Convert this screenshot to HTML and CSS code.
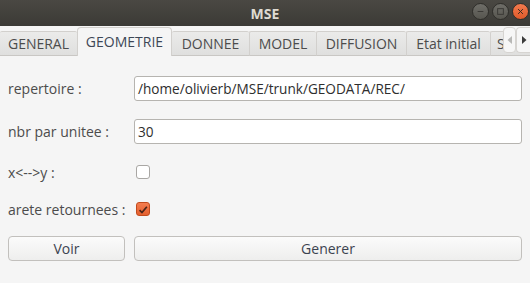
FILE: index.html
```html
<!DOCTYPE html>
<html>
<head>
<meta charset="utf-8">
<link rel="stylesheet" href="styles.css">
</head>
<body>
<div class="window">
  <div class="titlebar">
    <span class="title">MSE</span>
    <div class="wbtns">
      <span class="wbtn"><svg width="16" height="16" viewBox="0 0 16 16"><line x1="4.5" y1="8" x2="11.5" y2="8" stroke="#3a3935" stroke-width="1.2"/></svg></span>
      <span class="wbtn"><svg width="16" height="16" viewBox="0 0 16 16"><rect x="4.5" y="4.5" width="7" height="7" fill="none" stroke="#3a3935" stroke-width="1.2"/></svg></span>
      <span class="wbtn close"><svg width="16" height="16" viewBox="0 0 16 16"><path d="M5 5L11 11M11 5L5 11" stroke="#3a2a20" stroke-width="1.2"/></svg></span>
    </div>
  </div>
  <div class="tabbar">
    <div class="tab t1">GENERAL</div>
    <div class="tab t2 active">GEOMETRIE</div>
    <div class="tab t3">DONNEE</div>
    <div class="tab t4">MODEL</div>
    <div class="tab t5">DIFFUSION</div>
    <div class="tab t6">Etat initial</div>
    <div class="tab t7">S</div>
    <div class="scroll">
      <span class="sbtn left"><svg width="8" height="10" viewBox="0 0 8 10"><path d="M6 1L1.5 5L6 9Z" fill="#b8b8b6"/></svg></span>
      <span class="sbtn right"><svg width="8" height="10" viewBox="0 0 8 10"><path d="M2 1L6.5 5L2 9Z" fill="#3c3c3c"/></svg></span>
    </div>
  </div>
  <div class="content">
    <div class="row">
      <label class="lbl">repertoire :</label>
      <div class="input">/home/olivierb/MSE/trunk/GEODATA/REC/</div>
    </div>
    <div class="row">
      <label class="lbl">nbr par unitee :</label>
      <div class="input">30</div>
    </div>
    <div class="row crow">
      <label class="lbl">x&lt;--&gt;y :</label>
      <span class="check"></span>
    </div>
    <div class="row crow">
      <label class="lbl">arete retournees :</label>
      <span class="check on"><svg width="14" height="14" viewBox="0 0 14 14"><path d="M3 7.2L5.8 10L11.5 3.2" fill="none" stroke="#4a2418" stroke-width="2"/></svg></span>
    </div>
    <div class="row brow">
      <div class="btn voir">Voir</div>
      <div class="btn gen">Generer</div>
    </div>
  </div>
</div>
</body>
</html>
```
FILE: styles.css
```css
html, body {
  margin: 0;
  padding: 0;
  width: 530px;
  height: 283px;
  overflow: hidden;
  background: #f5f5f5;
  font-family: "Open Sans", "Noto Sans", sans-serif;
  font-size: 13px;
  color: #4c4c4c;
}
.window {
  display: flex;
  flex-direction: column;
  height: 283px;
}
.titlebar {
  height: 26px;
  background: linear-gradient(#4a4843, #3b3a36);
  display: flex;
  align-items: center;
  justify-content: center;
  position: relative;
}
.title {
  color: #dfdbd2;
  font-weight: bold;
  font-size: 14px;
  font-family: "Open Sans", sans-serif;
}
.wbtns {
  position: absolute;
  right: 1px;
  top: 3px;
  display: flex;
  gap: 3px;
}
.wbtn {
  width: 17px;
  height: 17px;
  border-radius: 50%;
  background: linear-gradient(#6e6d68, #57564f);
  border: 1px solid #2f2e2a;
  box-sizing: border-box;
  display: flex;
  align-items: center;
  justify-content: center;
}
.wbtn svg { width: 13px; height: 13px; }
.wbtn.close {
  background: linear-gradient(#f27a4e, #e05a2a);
}
.tabbar {
  height: 30px;
  display: flex;
  align-items: flex-end;
  background: #f5f5f5;
  position: relative;
  border-bottom: 1px solid #f5f5f5;
}
.tab {
  height: 25px;
  box-sizing: border-box;
  border: 1px solid #d2d0cd;
  border-bottom: 1px solid #c9c7c4;
  border-right: none;
  background: linear-gradient(#ebebea, #dfdfde);
  display: flex;
  align-items: center;
  justify-content: center;
  font-size: 14px;
  color: #4c4c4c;
  border-radius: 2px 2px 0 0;
  white-space: nowrap;
  overflow: hidden;
}
.tab.active {
  height: 29px;
  background: #f5f5f5;
  border: 1px solid #d2d0cd;
  border-bottom: none;
  color: #3d4756;
  border-radius: 4px 4px 0 0;
  padding-bottom: 2px;
}
.t1 { width: 77px; border-left: none; }
.t2 { width: 95px; }
.t3 { width: 77px; border-left: none; }
.t4 { width: 67px; }
.t5 { width: 90px; }
.t6 { width: 84px; }
.t7 { width: 40px; justify-content: flex-start; padding-left: 6px; }
.scroll {
  position: absolute;
  right: 0;
  bottom: 3px;
  display: flex;
}
.sbtn {
  width: 13px;
  height: 26px;
  box-sizing: border-box;
  border: 1px solid #d6d4d1;
  background: #f6f6f6;
  border-radius: 4px;
  display: flex;
  align-items: center;
  justify-content: center;
}
.sbtn.right { width: 14px; border-right: none; border-radius: 4px 0 0 4px; }
.content {
  padding: 19px 8px 0 8px;
  display: flex;
  flex-direction: column;
}
.row {
  display: flex;
  align-items: center;
  height: 25px;
  margin-bottom: 18px;
}
.crow { height: 16px; margin-bottom: 21px; }
.row:nth-child(3) { margin-top: 2px; }
.lbl {
  width: 126px;
  flex: none;
  font-size: 14px;
}
.input {
  flex: 1;
  height: 25px;
  box-sizing: border-box;
  border: 1px solid #b6b4b0;
  border-radius: 3px;
  background: #ffffff;
  display: flex;
  align-items: center;
  padding-left: 3px;
  color: #2e2e2e;
  font-size: 13.6px;
}
.check {
  width: 14px;
  height: 14px;
  box-sizing: border-box;
  border: 1px solid #a9a7a4;
  border-radius: 3px;
  background: #ffffff;
  margin-left: 2px;
  display: flex;
}
.check.on {
  background: linear-gradient(#f47d4f, #e4602f);
  border-color: #c24a1c;
}
.brow { margin-top: -2px; gap: 9px; height: 25px; }
.btn {
  height: 25px;
  box-sizing: border-box;
  border: 1px solid #c2c0bd;
  border-radius: 4px;
  background: linear-gradient(#fbfbfb, #eeeeed);
  display: flex;
  align-items: center;
  justify-content: center;
  font-size: 14px;
  color: #3c4350;
}
.voir { width: 117px; }
.gen { flex: 1; }
```
